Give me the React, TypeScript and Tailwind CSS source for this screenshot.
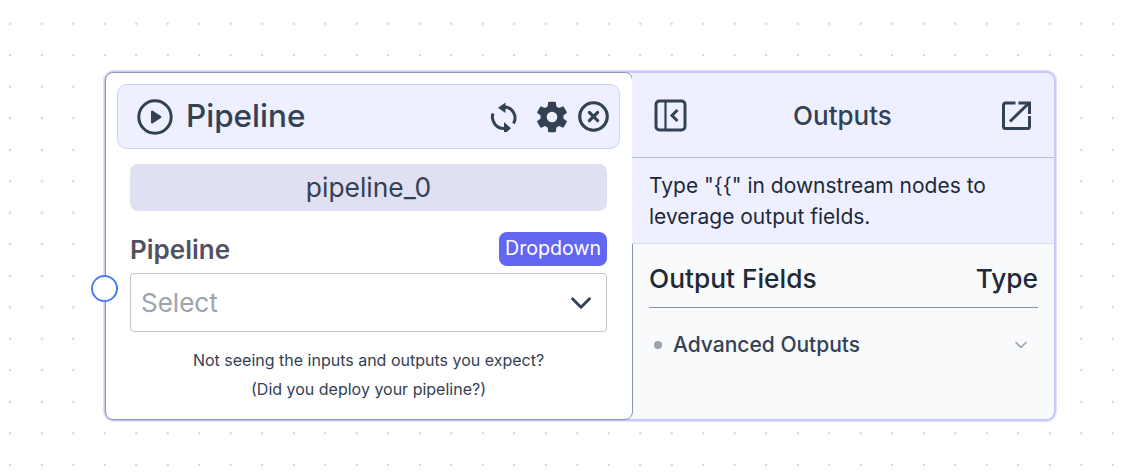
import React from 'react';
import { ChevronDown, CircleX } from 'lucide-react';
import { IoSettingsSharp } from 'react-icons/io5';

const App: React.FC = () => {
  return (
    <div
      className="w-[1134px] h-[476px] bg-white overflow-hidden pl-[104px] pt-[71px] font-['Inter',sans-serif] text-[#334155] bg-[radial-gradient(circle,#cbd5e1_1.2px,transparent_1.6px)] bg-[length:31.5px_31.5px] bg-[position:-5.5px_8px]"
    >
      <div className="relative flex w-[952px] h-[350px] rounded-[10px] border-2 border-[#c8c9fa] bg-[#f8fafc] shadow-[0_0_0_1px_#dfe0fd]">
        {/* Input handle */}
        <div className="absolute left-[-15px] top-[202px] w-[27px] h-[27px] rounded-full border-[2.5px] border-[#4f7df0] bg-white z-10" />

        {/* Left panel */}
        <div className="w-[528px] -m-px shrink-0 rounded-[8px] border border-[#8a94b8] bg-white pl-[11px] pr-[12px] pt-[11px]">
          <div className="flex items-center h-[65px] rounded-[10px] border border-[#c7d2fe] bg-[#eef0ff] pl-[19px] pr-[9px]">
            <svg width="36" height="36" viewBox="0 0 36 36" fill="none" className="shrink-0">
              <circle cx="18" cy="18" r="16.2" stroke="#334155" strokeWidth="3" />
              <path d="M14.5 12.5v11a.6.6 0 0 0 .9.5l8.4-5.4a.7.7 0 0 0 0-1.2l-8.4-5.4a.6.6 0 0 0-.9.5z" fill="#334155" stroke="#334155" strokeWidth="1" />
            </svg>
            <span className="ml-[13px] pb-[2px] text-[31.5px] font-medium leading-none">Pipeline</span>
            <div className="ml-auto flex items-center">
              <svg width="30" height="30" viewBox="5 5 30 30" fill="none" stroke="#334155" strokeWidth="3" className="mr-[15px]">
                <path d="M19 10a11 11 0 0 1 9.5 16.5" />
                <path d="M8 16.5a11.5 11.5 0 0 0 12 15" />
                <path d="M20.5 5.5 13 10.7l7.5 5.3z" fill="#334155" stroke="none" />
                <path d="M19 25l7 6.3-7 6z" fill="#334155" stroke="none" />
              </svg>
              <IoSettingsSharp size={34} className="mr-[8px]" />
              <CircleX size={33} strokeWidth={2.3} />
            </div>
          </div>

          <div className="mx-[13px] mt-[15px] h-[47px] flex items-center justify-center rounded-[8px] bg-[#dfe0f2] text-[26.4px]">
            pipeline_0
          </div>

          <div className="mx-[13px] mt-[20px] flex items-center justify-between h-[36px]">
            <span className="text-[26px] font-semibold text-[#52525f]">Pipeline</span>
            <span className="h-[34px] flex items-center rounded-[8px] bg-[#6366f1] px-[6px] text-[19.6px] text-white">Dropdown</span>
          </div>

          <div className="mx-[13px] mt-[6px] h-[59px] flex items-center justify-between rounded-[4px] border border-[#c4c4c8] pl-[10px] pr-[8px]">
            <span className="text-[26px] text-[#9ca3af]">Select</span>
            <ChevronDown size={34} strokeWidth={2} />
          </div>

          <p className="mt-[16px] text-center text-[16px] leading-[24px]">Not seeing the inputs and outputs you expect?</p>
          <p className="mt-[5px] text-center text-[16px] leading-[24px]">(Did you deploy your pipeline?)</p>
        </div>

        {/* Right panel */}
        <div className="flex-1 min-w-0 flex flex-col">
          <div className="flex items-center justify-between h-[85px] rounded-tr-[8px] border-b border-[#b9bbe6] bg-[#eef0ff] pl-[22px] pr-[23px]">
            <svg width="33" height="33" viewBox="0 0 33 33" fill="none" stroke="#334155" strokeWidth="3">
              <rect x="2" y="2" width="29" height="29" rx="3.5" />
              <path d="M11.5 2v29" strokeWidth="2.2" />
              <path d="M23.5 11l-5.5 5.5 5.5 5.5" />
            </svg>
            <span className="text-[26px] font-medium mr-[4px]">Outputs</span>
            <svg width="29" height="29" viewBox="0 0 29 29" fill="none" stroke="#334155" strokeWidth="3">
              <path d="M13.5 2H3.5a2 2 0 0 0-2 2v21.5a2 2 0 0 0 2 2H25.5a2 2 0 0 0 2-2V15" />
              <path d="M8 20.5 26.5 2.5" />
              <path d="M16.5 2h11v11" />
            </svg>
          </div>
          <div className="h-[86px] border-b border-[#dcdee8] bg-[#eef0ff] px-[17px] pt-[12px] text-[21px] leading-[31px] text-[#1e293b]">
            Type "&#123;&#123;" in downstream nodes to leverage output fields.
          </div>
          <div className="ml-[17px] mr-[16px] mt-[14px] h-[50px] flex items-center justify-between border-b border-[#8a8f99] pb-[8px] text-[26.3px] font-medium text-[#1f2937]">
            <span>Output Fields</span>
            <span>Type</span>
          </div>
          <div className="mt-[21px] ml-[22px] mr-[23px] flex items-center text-[21px] font-medium">
            <span className="w-[8px] h-[8px] rounded-full bg-[#9ca3af] mr-[11px]" />
            <span>Advanced Outputs</span>
            <ChevronDown size={20} strokeWidth={2} className="ml-auto text-[#9ca3af]" />
          </div>
        </div>
      </div>
    </div>
  );
};

export default App;
